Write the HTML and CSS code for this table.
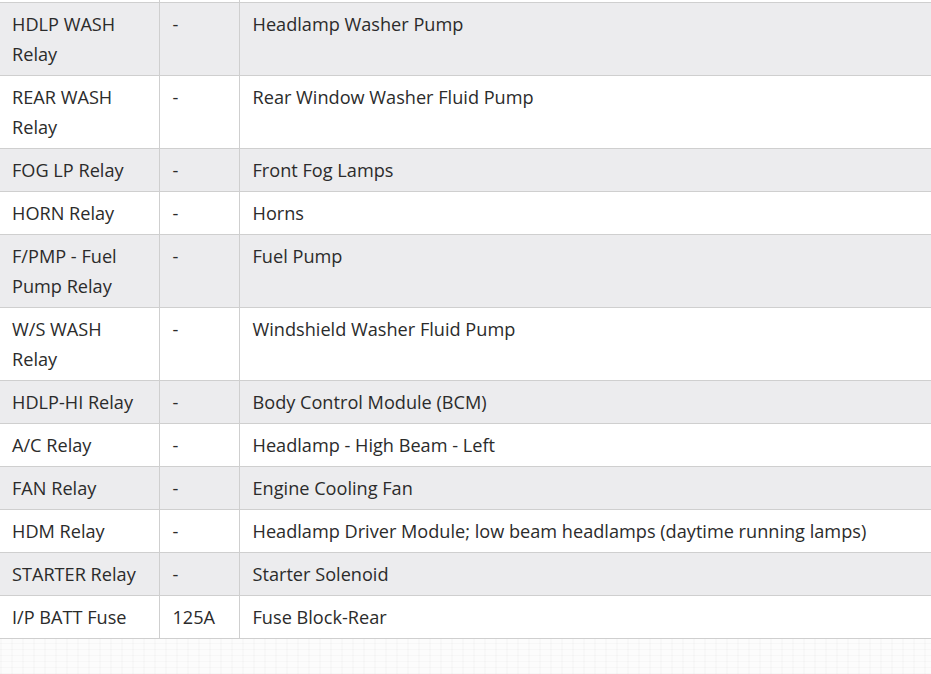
FILE: index.html
```html
<!DOCTYPE html>
<html>
<head>
<meta charset="utf-8">
<link rel="stylesheet" href="styles.css">
</head>
<body>
<div class="page">
  <div class="table-wrap">
    <table class="fuse-table">
      <colgroup>
        <col class="c-name">
        <col class="c-amp">
        <col class="c-desc">
      </colgroup>
      <tbody>
        <tr class="row-clip"><td></td><td></td><td></td></tr>
        <tr class="alt"><td>HDLP WASH Relay</td><td>-</td><td>Headlamp Washer Pump</td></tr>
        <tr><td>REAR WASH Relay</td><td>-</td><td>Rear Window Washer Fluid Pump</td></tr>
        <tr class="alt"><td>FOG LP Relay</td><td>-</td><td>Front Fog Lamps</td></tr>
        <tr><td>HORN Relay</td><td>-</td><td>Horns</td></tr>
        <tr class="alt"><td>F/PMP - Fuel Pump Relay</td><td>-</td><td>Fuel Pump</td></tr>
        <tr><td>W/S WASH Relay</td><td>-</td><td>Windshield Washer Fluid Pump</td></tr>
        <tr class="alt"><td>HDLP-HI Relay</td><td>-</td><td>Body Control Module (BCM)</td></tr>
        <tr><td>A/C Relay</td><td>-</td><td>Headlamp - High Beam - Left</td></tr>
        <tr class="alt"><td>FAN Relay</td><td>-</td><td>Engine Cooling Fan</td></tr>
        <tr><td>HDM Relay</td><td>-</td><td>Headlamp Driver Module; low beam headlamps (daytime running lamps)</td></tr>
        <tr class="alt"><td>STARTER Relay</td><td>-</td><td>Starter Solenoid</td></tr>
        <tr><td>I/P BATT Fuse</td><td>125A</td><td>Fuse Block-Rear</td></tr>
      </tbody>
    </table>
  </div>
  <div class="pattern"></div>
</div>
</body>
</html>
```

FILE: styles.css
```css
html, body {
  margin: 0;
  padding: 0;
  background: #ffffff;
}
.page {
  width: 931px;
  height: 674px;
  overflow: hidden;
  display: flex;
  flex-direction: column;
}
.table-wrap {
  background: #fff;
}
.fuse-table {
  border-collapse: collapse;
  width: 932px;
  font-family: "Open Sans", "Noto Sans", sans-serif;
  font-size: 18.15px;
  line-height: 30px;
  color: #2b2b2b;
  table-layout: fixed;
}
.c-name { width: 159px; }
.c-amp { width: 80px; }
.fuse-table td {
  border: 1px solid #cfcfcf;
  padding: 6px 10px 6px 13px;
  vertical-align: top;
  text-align: left;
}
.fuse-table td:first-child {
  border-left: none;
  padding-left: 12px;
  padding-right: 16px;
}
.fuse-table tr.row-clip td {
  height: 2px;
  padding: 0;
  border-top: none;
}
.fuse-table tr.alt td {
  background: #ececee;
}
.pattern {
  flex: 1;
  background-color: #fcfcfc;
  background-image:
    repeating-linear-gradient(0deg, rgba(0,0,0,0.018) 0 1px, transparent 1px 6px),
    repeating-linear-gradient(90deg, rgba(0,0,0,0.015) 0 2px, transparent 2px 11px);
}
```
